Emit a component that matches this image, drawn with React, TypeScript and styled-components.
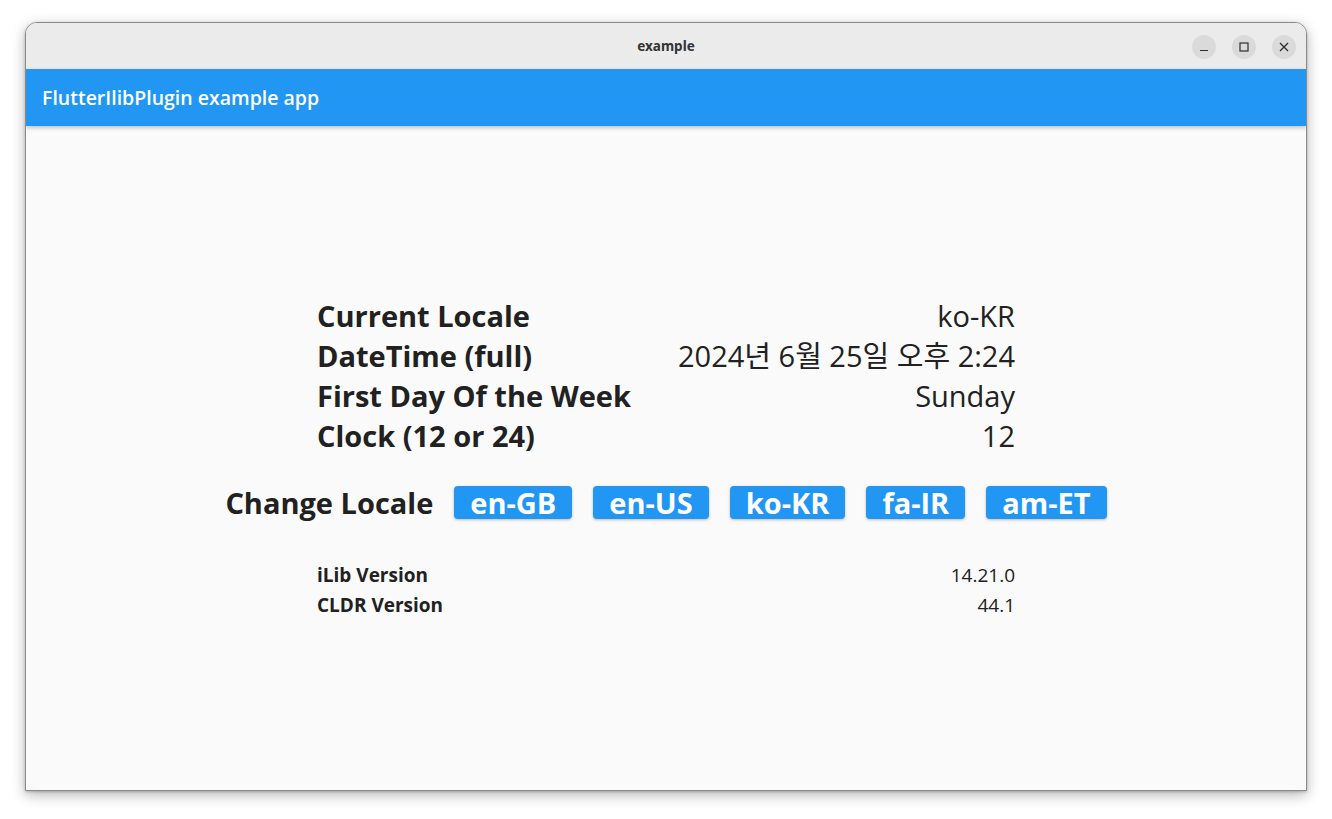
import React from 'react';
import styled, { createGlobalStyle } from 'styled-components';

const GlobalStyle = createGlobalStyle`
  html, body {
    margin: 0;
    padding: 0;
    background: #ffffff;
  }
  body {
    font-family: "Open Sans", "Noto Sans", "Noto Sans CJK KR", sans-serif;
  }
`;

const Desktop = styled.div`
  width: 1332px;
  height: 819px;
  padding: 22px 0 0 25px;
  box-sizing: border-box;
`;

const Window = styled.div`
  width: 1282px;
  height: 769px;
  box-sizing: border-box;
  border: 1px solid #8a8a8a;
  border-radius: 12px 12px 0 0;
  overflow: hidden;
  display: flex;
  flex-direction: column;
  box-shadow: 0 4px 14px rgba(0, 0, 0, 0.28), 0 1px 3px rgba(0, 0, 0, 0.2);
  background: #fafafa;
`;

const TitleBar = styled.div`
  height: 46px;
  flex-shrink: 0;
  background: #ebebeb;
  display: flex;
  align-items: center;
  justify-content: center;
  position: relative;
`;

const WindowTitle = styled.span`
  font-family: "Noto Sans", sans-serif;
  font-weight: 700;
  font-size: 13.5px;
  color: #333333;
`;

const Controls = styled.div`
  position: absolute;
  right: 10px;
  top: 12px;
  display: flex;
  gap: 16px;
`;

const ControlButton = styled.div`
  width: 24px;
  height: 24px;
  border-radius: 50%;
  background: #dadada;
  display: flex;
  align-items: center;
  justify-content: center;
`;

const AppBar = styled.div`
  height: 57px;
  flex-shrink: 0;
  background: #2196f3;
  display: flex;
  align-items: center;
  padding-left: 16px;
  box-shadow: 0 2px 4px rgba(0, 0, 0, 0.22);
  position: relative;
  z-index: 1;
`;

const AppTitle = styled.h1`
  margin: 0;
  font-size: 19.5px;
  font-weight: 600;
  color: #ffffff;
`;

const Body = styled.main`
  flex: 1;
  display: flex;
  flex-direction: column;
  align-items: center;
  justify-content: center;
  color: #212121;
`;

const InfoTable = styled.div`
  width: 698px;
  display: grid;
  grid-template-columns: auto 1fr;
`;

const Label = styled.div<{ small?: boolean }>`
  font-weight: 700;
  font-size: ${({ small }) => (small ? '19px' : '29px')};
  line-height: ${({ small }) => (small ? '30px' : '40px')};
`;

const Value = styled.div<{ small?: boolean }>`
  text-align: right;
  font-weight: 400;
  font-size: ${({ small }) => (small ? '19px' : '29px')};
  line-height: ${({ small }) => (small ? '30px' : '40px')};
`;

const LocaleRow = styled.div`
  display: flex;
  align-items: center;
  gap: 21px;
  margin: 22px 0 34px;
  height: 48px;
`;

const LocaleLabel = styled.span`
  font-weight: 700;
  font-size: 29px;
`;

const LocaleButton = styled.button`
  height: 33px;
  padding: 0 16px;
  border: none;
  border-radius: 4px;
  background: #2196f3;
  color: #ffffff;
  font-family: inherit;
  font-weight: 700;
  font-size: 29px;
  line-height: 33px;
  box-shadow: 0 1px 3px rgba(0, 0, 0, 0.25);
  cursor: pointer;
`;

const rows = [
  ['Current Locale', 'ko-KR'],
  ['DateTime (full)', '2024년 6월 25일 오후 2:24'],
  ['First Day Of the Week', 'Sunday'],
  ['Clock (12 or 24)', '12'],
];

const versions = [
  ['iLib Version', '14.21.0'],
  ['CLDR Version', '44.1'],
];

const locales = ['en-GB', 'en-US', 'ko-KR', 'fa-IR', 'am-ET'];

export default function App() {
  return (
    <>
      <GlobalStyle />
      <Desktop>
        <Window>
          <TitleBar>
            <WindowTitle>example</WindowTitle>
            <Controls>
              <ControlButton>
                <svg width="10" height="10" viewBox="0 0 10 10">
                  <path d="M1 8.5h8" stroke="#2e2e2e" strokeWidth="1.2" />
                </svg>
              </ControlButton>
              <ControlButton>
                <svg width="10" height="10" viewBox="0 0 10 10">
                  <rect x="1" y="1" width="8" height="8" fill="none" stroke="#2e2e2e" strokeWidth="1.2" />
                </svg>
              </ControlButton>
              <ControlButton>
                <svg width="10" height="10" viewBox="0 0 10 10">
                  <path d="M1 1l8 8M9 1l-8 8" stroke="#2e2e2e" strokeWidth="1.3" />
                </svg>
              </ControlButton>
            </Controls>
          </TitleBar>
          <AppBar>
            <AppTitle>FlutterIlibPlugin example app</AppTitle>
          </AppBar>
          <Body>
            <InfoTable>
              {rows.map(([label, value]) => (
                <React.Fragment key={label}>
                  <Label>{label}</Label>
                  <Value>{value}</Value>
                </React.Fragment>
              ))}
            </InfoTable>
            <LocaleRow>
              <LocaleLabel>Change Locale</LocaleLabel>
              {locales.map((l) => (
                <LocaleButton key={l}>{l}</LocaleButton>
              ))}
            </LocaleRow>
            <InfoTable>
              {versions.map(([label, value]) => (
                <React.Fragment key={label}>
                  <Label small>{label}</Label>
                  <Value small>{value}</Value>
                </React.Fragment>
              ))}
            </InfoTable>
          </Body>
        </Window>
      </Desktop>
    </>
  );
}
